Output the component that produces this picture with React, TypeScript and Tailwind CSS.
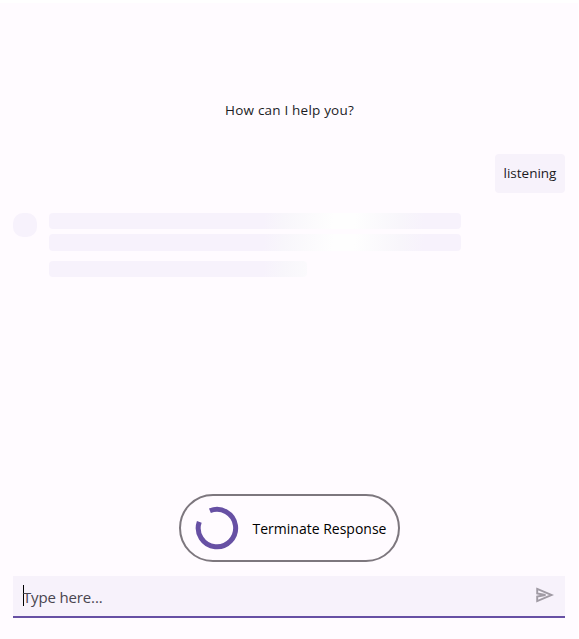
import React from "react";

const shimmer =
  "bg-[linear-gradient(97deg,#f7f2fc_0%,#f7f2fc_52%,#f8f6fb_57%,#fefefe_69%,#fefefe_74%,#f8f6fb_85%,#f7f2fc_91%,#f7f2fc_100%)] bg-[length:412px_100%] bg-no-repeat";

function Skeleton() {
  return (
    <div className="mt-5 ml-[13px] flex items-start gap-3">
      <div className="h-6 w-6 rounded-[10px] bg-[#f7f2fc]" />
      <div className="flex flex-col">
        <div className={`h-4 w-[412px] rounded ${shimmer}`} />
        <div className={`mt-[5px] h-[17px] w-[412px] rounded ${shimmer}`} />
        <div className={`mt-[10px] h-4 w-[258px] rounded ${shimmer}`} />
      </div>
    </div>
  );
}

function Spinner() {
  return (
    <svg className="h-11 w-11 shrink-0" viewBox="0 0 44 44" fill="none">
      <path d="M14.9 4.7A18.7 18.7 0 1 1 4.3 15.8" stroke="#6750a4" strokeWidth="5" />
    </svg>
  );
}

export default function App() {
  return (
    <div className="flex h-[639px] w-full flex-col overflow-hidden border-t-[3px] border-r border-white bg-[#fffbff] font-['Open_Sans','Noto_Sans',sans-serif]">
      <div className="mt-[97px] flex h-5 items-center justify-center pl-px text-[13.5px] leading-5 text-[#1c1b1f]">
        <span className="tracking-[0.2px]">How can I help you?</span>
      </div>
      <div className="mt-[34px] mr-[13px] flex h-[39px] w-[70px] items-center justify-center self-end rounded bg-[#f7f2fb] pb-px text-[13.5px] leading-5 text-[#1c1b1f]">
        <span>listening</span>
      </div>
      <Skeleton />
      <button className="mt-[217px] ml-[179px] flex h-[68px] w-[221px] items-center rounded-full border-2 border-[#7d777e] pl-[14px] text-[14px] whitespace-nowrap text-black">
        <Spinner />
        <span className="mt-[2px] ml-[13.5px] leading-5">Terminate Response</span>
      </button>
      <div className="mt-[14px] mr-[13px] ml-[13px] flex h-[42px] items-center border-b-2 border-[#6750a4] bg-[#f7f2fb] pr-[11px] pl-[10px]">
        <span className="mt-[-2px] h-[21px] w-px bg-black" />
        <span className="mt-[2px] -ml-px text-[15px] leading-5 tracking-[-0.15px] text-[#49454f]">Type here...</span>
        <svg className="mt-[-2px] ml-auto h-4 w-[18px]" viewBox="0 0 18 16" fill="none">
          <path d="M1.2 1.9L15.8 8L1.2 14.1V9.6L9.5 8L1.2 6.4Z" stroke="#a09ba4" strokeWidth="1.9" />
        </svg>
      </div>
    </div>
  );
}
